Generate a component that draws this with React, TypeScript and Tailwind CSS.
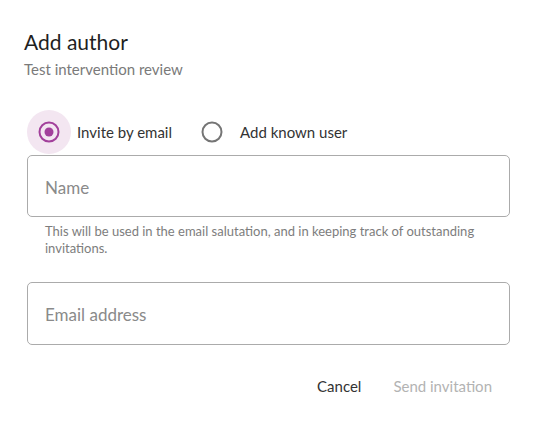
import { useState } from "react";

function Radio({ checked }: { checked: boolean }) {
  return (
    <span
      className={
        "flex h-[44px] w-[44px] items-center justify-center rounded-full " +
        (checked ? "bg-[#f3e6f1]" : "")
      }
    >
      <svg width="24" height="24" viewBox="0 0 24 24">
        <circle
          cx="12"
          cy="12"
          r="9.5"
          fill="none"
          stroke={checked ? "#a2409b" : "#757575"}
          strokeWidth="2"
        />
        {checked && <circle cx="12" cy="12" r="4.5" fill="#a2409b" />}
      </svg>
    </span>
  );
}

export default function App() {
  const [mode, setMode] = useState<"email" | "known">("email");

  return (
    <div
      className="h-[442px] w-[537px] bg-white text-[#222]"
      style={{ fontFamily: "Lato, 'Noto Sans', sans-serif" }}
    >
      <div className="px-6 pt-[29px]">
        <h1 className="text-[21px] leading-[26px] text-[#1f1f1f]">Add author</h1>
        <div className="mt-[4px] text-[15px] leading-[20px] text-[#7a7a7a]">
          Test intervention review
        </div>
      </div>

      <div className="mt-[31px] flex items-center pl-[27px]">
        <button className="flex items-center" onClick={() => setMode("email")}>
          <Radio checked={mode === "email"} />
          <span className="ml-[6px] text-[15px] text-[#333]">Invite by email</span>
        </button>
        <button className="ml-[18px] flex items-center" onClick={() => setMode("known")}>
          <Radio checked={mode === "known"} />
          <span className="ml-[6px] text-[15px] text-[#333]">Add known user</span>
        </button>
      </div>

      <div className="px-[27px]">
        <div className="mt-[1px] flex h-[62px] items-center rounded-[5px] border border-[#ababab] bg-white px-[17px] pt-[3px]">
          <span className="text-[17px] text-[#8a8a8a]">Name</span>
        </div>
        <p className="mt-[6px] px-[18px] text-[13px] leading-[17px] text-[#7d7d7d]">
          This will be used in the email salutation, and in keeping track of outstanding
          invitations.
        </p>
        <div className="mt-[25px] flex h-[63px] items-center rounded-[5px] border border-[#ababab] bg-white px-[17px] pt-[3px]">
          <span className="text-[17px] text-[#8a8a8a]">Email address</span>
        </div>
      </div>

      <div className="mt-[30px] flex items-center justify-end pr-[45px]">
        <button className="text-[15px] text-[#333]">Cancel</button>
        <button className="ml-[32px] text-[15px] text-[#b3b3b3]" disabled>
          Send invitation
        </button>
      </div>
    </div>
  );
}
